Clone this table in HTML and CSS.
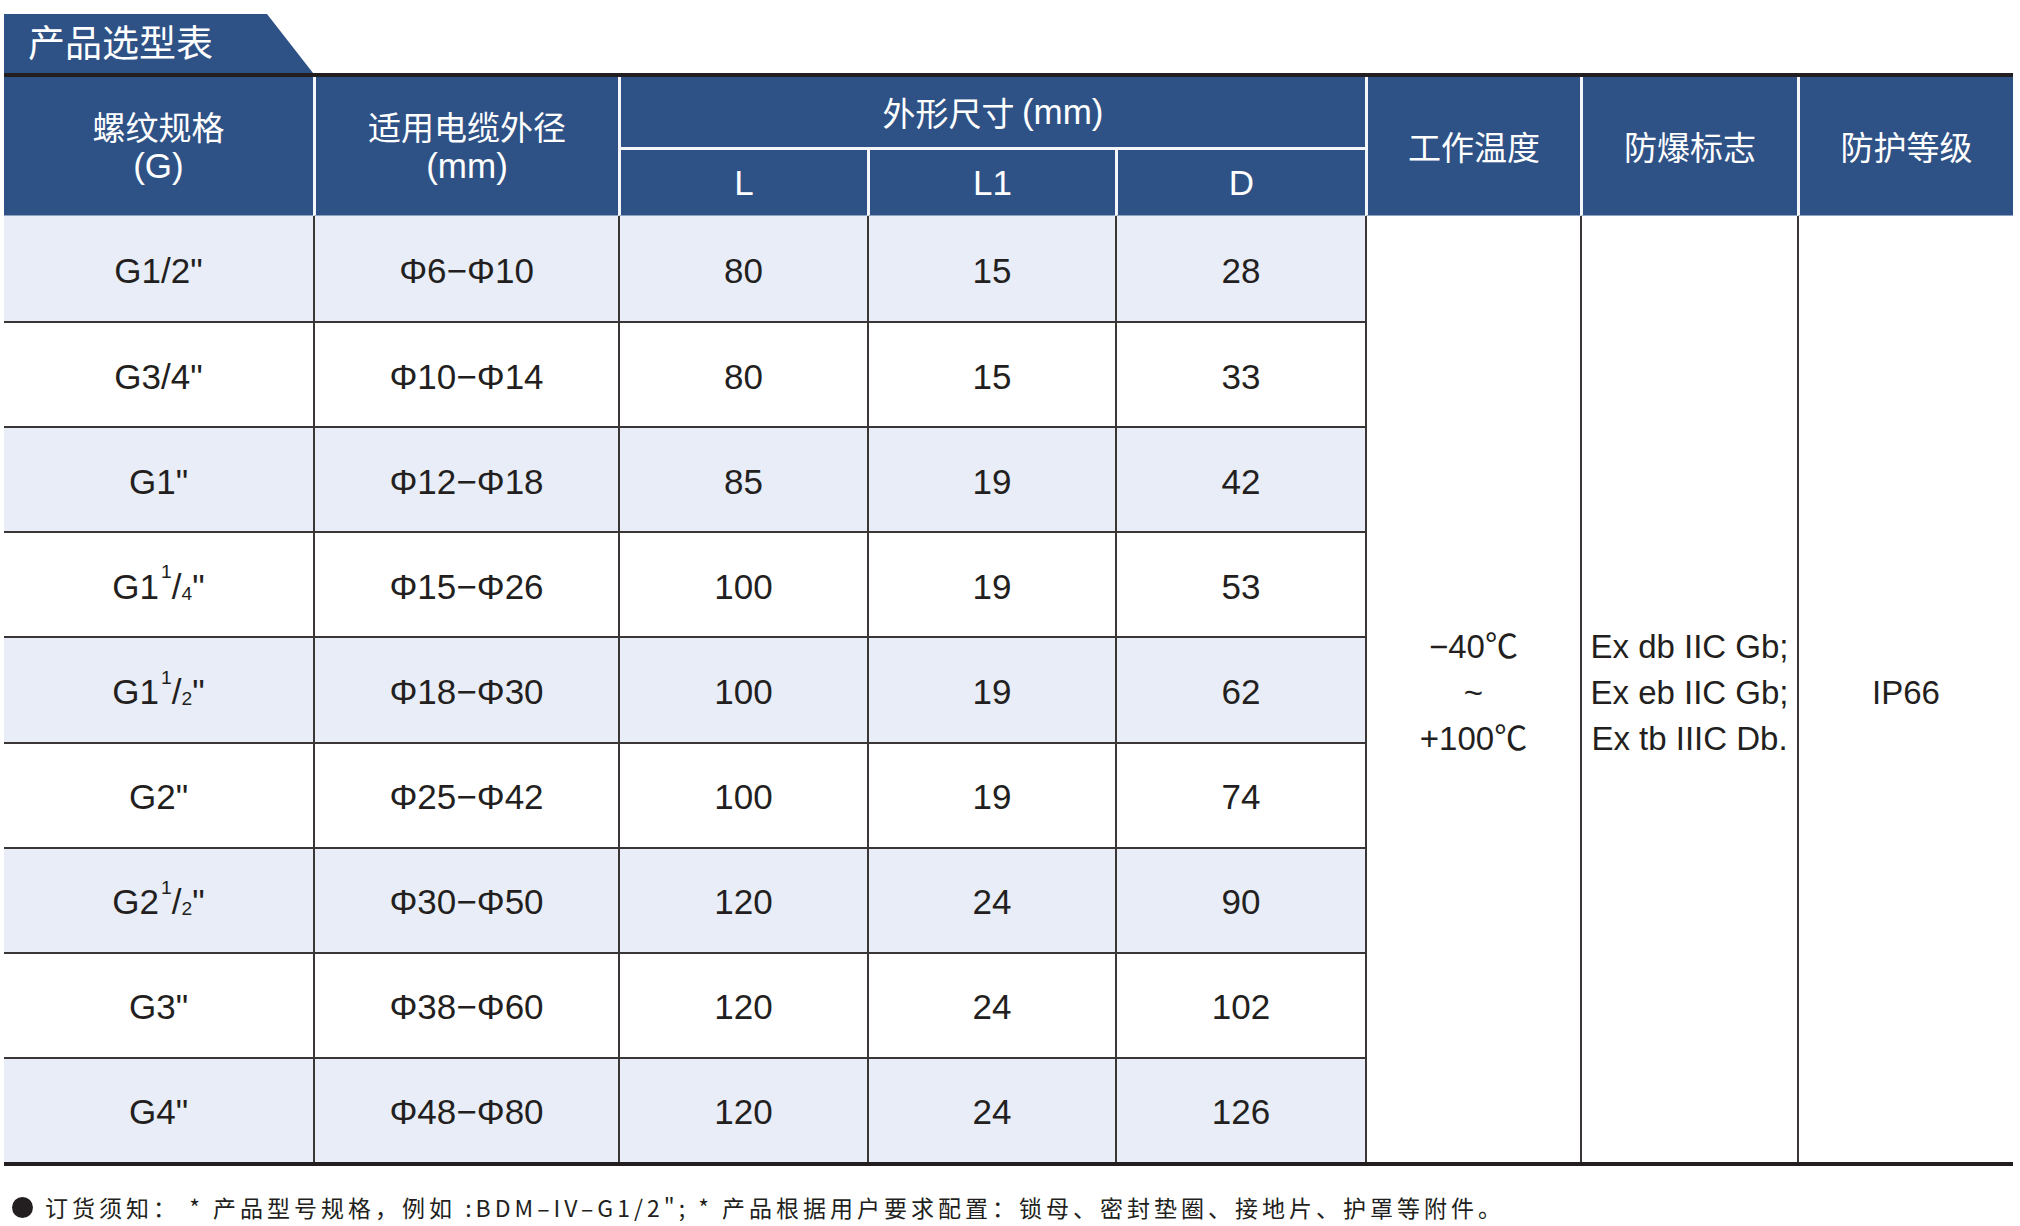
FILE: index.html
```html
<!DOCTYPE html>
<html lang="zh-CN">
<head>
<meta charset="utf-8">
<title>产品选型表</title>
<link rel="stylesheet" href="styles.css">
</head>
<body>
<div class="page">
  <div class="tab"><span class="tab-title">产品选型表</span></div>
  <div class="sheet">
    <div class="hd h-c1">螺纹规格<br><span class="lat">(G)</span></div>
    <div class="hd h-c2 sep">适用电缆外径<br><span class="lat">(mm)</span></div>
    <div class="hd h-group sep">外形尺寸&nbsp;<span class="lat">(mm)</span></div>
    <div class="hd h-sub h-c3 sep lat">L</div>
    <div class="hd h-sub h-c4 sep lat">L1</div>
    <div class="hd h-sub h-c5 sep lat">D</div>
    <div class="hd h-c6 sep">工作温度</div>
    <div class="hd h-c7 sep">防爆标志</div>
    <div class="hd h-c8 sep">防护等级</div>

    <div class="row shade"><div class="cell">G1/2"</div><div class="cell">Φ6−Φ10</div><div class="cell">80</div><div class="cell">15</div><div class="cell">28</div></div>
    <div class="row"><div class="cell">G3/4"</div><div class="cell">Φ10−Φ14</div><div class="cell">80</div><div class="cell">15</div><div class="cell">33</div></div>
    <div class="row shade"><div class="cell">G1"</div><div class="cell">Φ12−Φ18</div><div class="cell">85</div><div class="cell">19</div><div class="cell">42</div></div>
    <div class="row"><div class="cell">G1<span class="up">1</span>/<span class="dn">4</span>"</div><div class="cell">Φ15−Φ26</div><div class="cell">100</div><div class="cell">19</div><div class="cell">53</div></div>
    <div class="row shade"><div class="cell">G1<span class="up">1</span>/<span class="dn">2</span>"</div><div class="cell">Φ18−Φ30</div><div class="cell">100</div><div class="cell">19</div><div class="cell">62</div></div>
    <div class="row"><div class="cell">G2"</div><div class="cell">Φ25−Φ42</div><div class="cell">100</div><div class="cell">19</div><div class="cell">74</div></div>
    <div class="row shade"><div class="cell">G2<span class="up">1</span>/<span class="dn">2</span>"</div><div class="cell">Φ30−Φ50</div><div class="cell">120</div><div class="cell">24</div><div class="cell">90</div></div>
    <div class="row"><div class="cell">G3"</div><div class="cell">Φ38−Φ60</div><div class="cell">120</div><div class="cell">24</div><div class="cell">102</div></div>
    <div class="row shade"><div class="cell">G4"</div><div class="cell">Φ48−Φ80</div><div class="cell">120</div><div class="cell">24</div><div class="cell">126</div></div>

    <div class="merged m-c6"><span>−40℃</span><span>~</span><span>+100℃</span></div>
    <div class="merged m-c7"><span>Ex db IIC Gb;</span><span>Ex eb IIC Gb;</span><span>Ex tb IIIC Db.</span></div>
    <div class="merged m-c8"><span>IP66</span></div>
  </div>
  <p class="note"><span class="dot"></span><span class="note-text">订货须知： * 产品型号规格，例如 :BDM–IV–G1/2"; * 产品根据用户要求配置：锁母、密封垫圈、接地片、护罩等附件。</span></p>
</div>
</body>
</html>
```

FILE: styles.css
```css
* {
  box-sizing: border-box;
}

html,
body {
  margin: 0;
  background: #ffffff;
}

body {
  font-family: "Liberation Sans", Arial, "Noto Sans CJK SC", sans-serif;
  color: #231f20;
}

.page {
  width: 2020px;
  padding: 14px 0 0 4px;
}

/* title tab */
.tab {
  width: 309px;
  height: 59px;
  background: #2f5286;
  clip-path: polygon(0 0, 263px 0, 100% 100%, 0 100%);
  display: flex;
  align-items: center;
  padding: 0 0 5px 24px;
}

.tab-title {
  font-family: "Noto Sans CJK SC", sans-serif;
  font-size: 37px;
  line-height: 1;
  color: #ffffff;
}

/* table grid */
.sheet {
  display: grid;
  width: 2009px;
  height: 1093px;
  grid-template-columns: 309px 305px 249px 248px 250px 215px 217px 216px;
  grid-template-rows: 70px 69px repeat(9, 1fr);
  border-top: 4px solid #231f20;
  border-bottom: 4px solid #231f20;
}

.hd {
  background: #2f5286;
  color: #ffffff;
  font-family: "Noto Sans CJK SC", sans-serif;
  font-size: 33px;
  line-height: 40px;
  display: flex;
  align-items: center;
  justify-content: center;
  text-align: center;
  flex-wrap: wrap;
  border-bottom: 1px solid #8ea2c2;
}

.hd.h-c1,
.hd.h-c2 {
  flex-direction: column;
}

.lat {
  font-family: "Liberation Sans", Arial, sans-serif;
  font-size: 35px;
}

.hd.sep {
  border-left: 3px solid #f4f6fa;
}

.h-c1 { grid-column: 1; grid-row: 1 / 3; }
.h-c2 { grid-column: 2; grid-row: 1 / 3; }
.h-group { grid-column: 3 / 6; grid-row: 1; border-bottom: none; }
.h-c3 { grid-column: 3; grid-row: 2; }
.h-c4 { grid-column: 4; grid-row: 2; }
.h-c5 { grid-column: 5; grid-row: 2; }
.h-c6 { grid-column: 6; grid-row: 1 / 3; }
.h-c7 { grid-column: 7; grid-row: 1 / 3; }
.h-c8 { grid-column: 8; grid-row: 1 / 3; }

.hd.h-sub {
  border-top: 3px solid #f4f6fa;
}

/* body */
.row {
  display: contents;
}

.cell {
  display: flex;
  align-items: center;
  justify-content: center;
  padding-top: 4px;
  font-size: 35px;
  background: #ffffff;
  white-space: nowrap;
}

.row.shade > .cell {
  background: #e8edf7;
}

.row > .cell + .cell {
  border-left: 2px solid #3a3636;
}

.row + .row > .cell {
  border-top: 2px solid #3a3636;
}

.up,
.dn {
  font-size: 0.55em;
  position: relative;
}

.up {
  top: -0.75em;
  margin-left: 2px;
}

.dn {
  top: 0.35em;
}

.merged {
  grid-row: 3 / 12;
  border-left: 2px solid #3a3636;
  background: #ffffff;
  display: flex;
  flex-direction: column;
  align-items: center;
  justify-content: center;
  padding-top: 8px;
  font-size: 33px;
  line-height: 46px;
  text-align: center;
  white-space: nowrap;
}

.m-c6 { grid-column: 6; }
.m-c7 { grid-column: 7; }
.m-c8 { grid-column: 8; }

/* footnote */
.note {
  margin: 25px 0 0 8px;
  display: flex;
  align-items: center;
  font-family: "Noto Sans CJK SC", sans-serif;
  font-size: 23px;
  line-height: 32px;
  letter-spacing: 4px;
  color: #231f20;
}

.note-text {
  white-space: pre;
}

.dot {
  width: 21px;
  height: 21px;
  border-radius: 50%;
  background: #231f20;
  margin-right: 12px;
  flex: none;
}
```
